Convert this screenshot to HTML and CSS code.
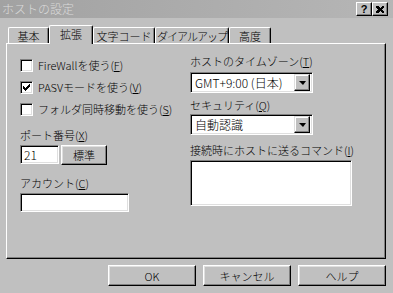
FILE: index.html
```html
<!DOCTYPE html>
<html lang="ja">
<head>
    <meta charset="UTF-8">
    <title>ホストの設定</title>
    <link rel="stylesheet" href="styles.css">
</head>
<body>
    <div class="window">
        <div class="titlebar">
            <span class="title">ホストの設定</span>
            <div class="caption-btns">
                <span class="cap-btn help">?</span>
                <span class="cap-btn">
                    <svg width="8" height="7" viewBox="0 0 8 7" shape-rendering="crispEdges">
                        <path d="M0 0h2l2 2 2-2h2v1l-2 2.5 2 2.5v1h-2l-2-2-2 2h-2v-1l2-2.5-2-2.5z" fill="#000"/>
                    </svg>
                </span>
            </div>
        </div>

        <div class="tabs">
            <div class="tab w-basic">基本</div>
            <div class="tab active">拡張</div>
            <div class="tab w-code">文字コード</div>
            <div class="tab w-dial">ダイアルアップ</div>
            <div class="tab w-adv">高度</div>
        </div>

        <div class="panel">
            <div class="col left">
                <div class="check"><span class="box"></span>FireWallを使う(<u>F</u>)</div>
                <div class="check"><span class="box">
                    <svg width="7" height="7" viewBox="0 0 7 7" shape-rendering="crispEdges">
                        <path d="M0 2h1v1h1v1h1v-1h1v-1h1v-1h1v-1h1v3h-1v1h-1v1h-1v1h-1v1h-1v-1h-1v-1h-1z" fill="#000"/>
                    </svg>
                </span>PASVモードを使う(<u>V</u>)</div>
                <div class="check"><span class="box"></span>フォルダ同時移動を使う(<u>S</u>)</div>

                <div class="lbl port-lbl">ポート番号(<u>X</u>)</div>
                <div class="port-row">
                    <div class="field port">21</div>
                    <div class="btn std">標準</div>
                </div>

                <div class="lbl acct-lbl">アカウント(<u>C</u>)</div>
                <div class="field acct"></div>
            </div>

            <div class="col right">
                <div class="lbl">ホストのタイムゾーン(<u>T</u>)</div>
                <div class="field combo tz">
                    <span class="combo-text">GMT+9:00 (日本)</span>
                    <span class="drop"><span class="arrow"></span></span>
                </div>

                <div class="lbl sec-lbl">セキュリティ(<u>Q</u>)</div>
                <div class="field combo sec">
                    <span class="combo-text">自動認識</span>
                    <span class="drop"><span class="arrow"></span></span>
                </div>

                <div class="lbl cmd-lbl">接続時にホストに送るコマンド(<u>I</u>)</div>
                <div class="field cmd"></div>
            </div>
        </div>

        <div class="actions">
            <div class="btn action">OK</div>
            <div class="btn action">キャンセル</div>
            <div class="btn action">ヘルプ</div>
        </div>
    </div>
</body>
</html>
```

FILE: styles.css
```css
body {
    margin: 0;
    background: #c0c0c0;
    font-family: "Noto Sans CJK JP", "Noto Sans", sans-serif;
    font-size: 11px;
    font-weight: 300;
    color: #000;
}
.window {
    width: 393px;
    height: 293px;
    overflow: hidden;
}
u {
    text-decoration: underline;
    text-underline-offset: 1px;
}

/* title bar (inactive) */
.titlebar {
    height: 18px;
    display: flex;
    align-items: center;
    justify-content: space-between;
    padding: 0 5px 0 2px;
    background: linear-gradient(to right, #a2a2a2, #b6b6b6);
}
.title {
    color: #dadada;
    font-size: 12px;
    line-height: 14px;
}
.caption-btns {
    display: flex;
}
.cap-btn {
    width: 16px;
    height: 14px;
    box-sizing: border-box;
    display: flex;
    align-items: center;
    justify-content: center;
    background: #c0c0c0;
    border: 1px solid;
    border-color: #fff #000 #000 #fff;
    box-shadow: inset -1px -1px #808080;
}
.cap-btn.help {
    font-family: "Liberation Sans", sans-serif;
    font-weight: bold;
    font-size: 11px;
    line-height: 12px;
}

/* tabs */
.tabs {
    display: flex;
    align-items: flex-end;
    height: 18px;
    margin-top: 7px;
    padding-left: 8px;
}
.tab {
    height: 16px;
    box-sizing: border-box;
    display: flex;
    align-items: center;
    justify-content: center;
    border-top: 1px solid #fff;
    border-left: 1px solid #fff;
    border-right: 1px solid #000;
    border-radius: 2px 2px 0 0;
    box-shadow: inset -1px 0 #808080;
    line-height: 14px;
    white-space: nowrap;
}
.w-basic { width: 41px; }
.w-code { width: 62px; }
.w-dial { width: 74px; letter-spacing: -1px; }
.w-adv { width: 42px; }
.tab.active {
    width: 44px;
    height: 19px;
    margin-bottom: -1px;
    padding-bottom: 2px;
    background: #c0c0c0;
    position: relative;
    z-index: 1;
}

/* tab page */
.panel {
    width: 380px;
    height: 216px;
    margin-left: 6px;
    box-sizing: border-box;
    border: 1px solid;
    border-color: #fff #000 #000 #fff;
    box-shadow: inset -1px -1px #808080;
    display: grid;
    grid-template-columns: 170px 1fr;
    align-items: start;
    padding: 10px 0 0 13px;
}
.col {
    display: flex;
    flex-direction: column;
    align-items: flex-start;
}
.lbl {
    line-height: 14px;
    height: 14px;
    white-space: nowrap;
}
.check {
    height: 22px;
    display: flex;
    align-items: center;
    white-space: nowrap;
}
.box {
    width: 13px;
    height: 13px;
    box-sizing: border-box;
    margin-right: 5px;
    background: #fff;
    border: 1px solid;
    border-color: #808080 #fff #fff #808080;
    box-shadow: inset 1px 1px #000, inset -1px -1px #dfdfdf;
    display: flex;
    align-items: center;
    justify-content: center;
}

/* sunken edit fields */
.field {
    box-sizing: border-box;
    background: #fff;
    border: 1px solid;
    border-color: #808080 #fff #fff #808080;
    box-shadow: inset 1px 1px #000, inset -1px -1px #dfdfdf;
}
.port-lbl { margin-top: 8px; }
.port-row {
    display: flex;
    gap: 2px;
    margin-top: 3px;
}
.port {
    width: 39px;
    height: 19px;
    padding: 2px 0 0 3px;
    line-height: 14px;
    font-size: 12px;
}
.acct-lbl { margin-top: 11px; }
.acct {
    width: 109px;
    height: 19px;
    margin-top: 3px;
}

/* raised buttons */
.btn {
    box-sizing: border-box;
    display: flex;
    align-items: center;
    justify-content: center;
    background: #c0c0c0;
    border: 1px solid;
    border-color: #fff #000 #000 #fff;
    box-shadow: inset -1px -1px #808080, inset 1px 1px #dfdfdf;
    line-height: 14px;
}
.std {
    width: 46px;
    height: 20px;
}

/* combo boxes */
.combo {
    width: 123px;
    height: 21px;
    display: flex;
    align-items: center;
    justify-content: space-between;
    padding: 2px;
}
.combo-text {
    padding-left: 2px;
    line-height: 14px;
    white-space: nowrap;
    font-size: 12px;
}
.drop {
    width: 16px;
    height: 17px;
    box-sizing: border-box;
    display: flex;
    align-items: center;
    justify-content: center;
    background: #c0c0c0;
    border: 1px solid;
    border-color: #dfdfdf #000 #000 #dfdfdf;
    box-shadow: inset -1px -1px #808080, inset 1px 1px #fff;
}
.arrow {
    width: 0;
    height: 0;
    border-left: 4px solid transparent;
    border-right: 3px solid transparent;
    border-top: 4px solid #000;
}
.tz { margin-top: 4px; }
.sec-lbl { margin-top: 5px; }
.sec { margin-top: 2px; }
.cmd-lbl { margin-top: 8px; }
.cmd {
    width: 162px;
    height: 46px;
    margin-top: 3px;
}

/* bottom buttons */
.actions {
    display: flex;
    justify-content: flex-end;
    gap: 7px;
    padding-right: 7px;
    margin-top: 6px;
}
.action {
    width: 88px;
    height: 21px;
}
```
